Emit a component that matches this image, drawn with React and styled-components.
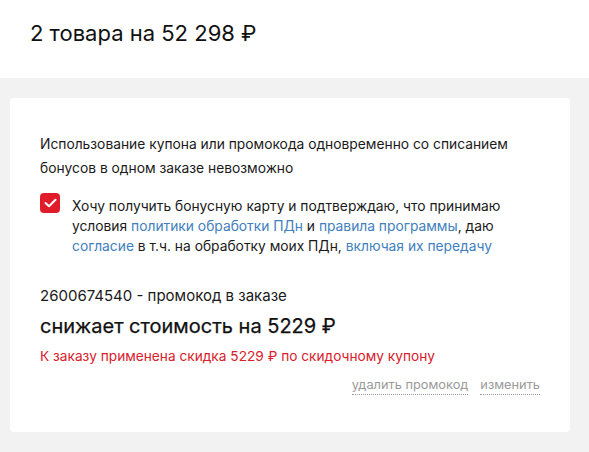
import React from "react";
import styled, { createGlobalStyle } from "styled-components";

const Global = createGlobalStyle`
  html, body { margin: 0; padding: 0; background: #f2f2f2; }
  body { font-family: Inter, "Noto Sans", sans-serif; color: #1a1a1a; }
`;

const Page = styled.div`
  width: 589px;
  height: 452px;
  background: #f2f2f2;
  display: flex;
  flex-direction: column;
`;

const Header = styled.header`
  background: #fff;
  height: 78px;
  box-sizing: border-box;
  padding: 19px 0 0 30px;
`;

const Title = styled.h1`
  margin: 0;
  font-size: 22px;
  font-weight: 400;
  line-height: 28px;
  color: #111;
`;

const Card = styled.section`
  margin: 20px 19px 0 10px;
  background: #fff;
  border-radius: 4px;
  height: 334px;
  box-sizing: border-box;
  padding: 34px 30px 0 30px;
  display: flex;
  flex-direction: column;
`;

const Notice = styled.p`
  margin: 0;
  font-size: 13.8px;
  line-height: 24px;
  color: #1a1a1a;
`;

const CheckRow = styled.label`
  display: flex;
  gap: 12px;
  margin-top: 16px;
  font-size: 13.8px;
  line-height: 20px;
`;

const Box = styled.span`
  flex: 0 0 20px;
  width: 20px;
  height: 20px;
  border-radius: 4px;
  background: #e11c2a;
  display: flex;
  align-items: center;
  justify-content: center;
  margin-top: -3px;
`;

const Link = styled.a`
  color: #4180bd;
  text-decoration: none;
`;

const Promo = styled.div`
  margin-top: 30px;
  display: flex;
  flex-direction: column;
`;

const Code = styled.div`
  font-size: 15px;
  line-height: 20px;
  color: #1a1a1a;
`;

const Saving = styled.div`
  font-size: 20px;
  line-height: 26px;
  margin-top: 7px;
  color: #111;
  font-weight: 400;
  -webkit-text-stroke: 0.25px #111;
`;

const Applied = styled.div`
  font-size: 13.7px;
  line-height: 18px;
  margin-top: 8px;
  color: #d9202b;
`;

const Actions = styled.div`
  display: flex;
  justify-content: flex-end;
  gap: 12px;
  margin-top: 11px;
`;

const Action = styled.span`
  font-size: 12.8px;
  line-height: 18px;
  color: #9a9a9a;
  border-bottom: 1px dotted #9a9a9a;
`;

export default function App() {
  return (
    <>
      <Global />
      <Page>
        <Header>
          <Title>2 товара на 52 298 ₽</Title>
        </Header>
        <Card>
          <Notice>
            Использование купона или промокода одновременно со списанием
            бонусов в одном заказе невозможно
          </Notice>
          <CheckRow>
            <Box>
              <svg width="13" height="10" viewBox="0 0 13 10" fill="none">
                <path d="M1.5 5 L5 8.3 L11.5 1.7" stroke="#fff" strokeWidth="2" strokeLinecap="round" strokeLinejoin="round" />
              </svg>
            </Box>
            <span>
              Хочу получить бонусную карту и подтверждаю, что принимаю условия{" "}
              <Link>политики обработки ПДн</Link> и <Link>правила программы</Link>, даю{" "}
              <Link>согласие</Link> в т.ч. на обработку моих ПДн, <Link>включая их передачу</Link>
            </span>
          </CheckRow>
          <Promo>
            <Code>2600674540 - промокод в заказе</Code>
            <Saving>снижает стоимость на 5229 ₽</Saving>
            <Applied>К заказу применена скидка 5229 ₽ по скидочному купону</Applied>
            <Actions>
              <Action>удалить промокод</Action>
              <Action>изменить</Action>
            </Actions>
          </Promo>
        </Card>
      </Page>
    </>
  );
}
